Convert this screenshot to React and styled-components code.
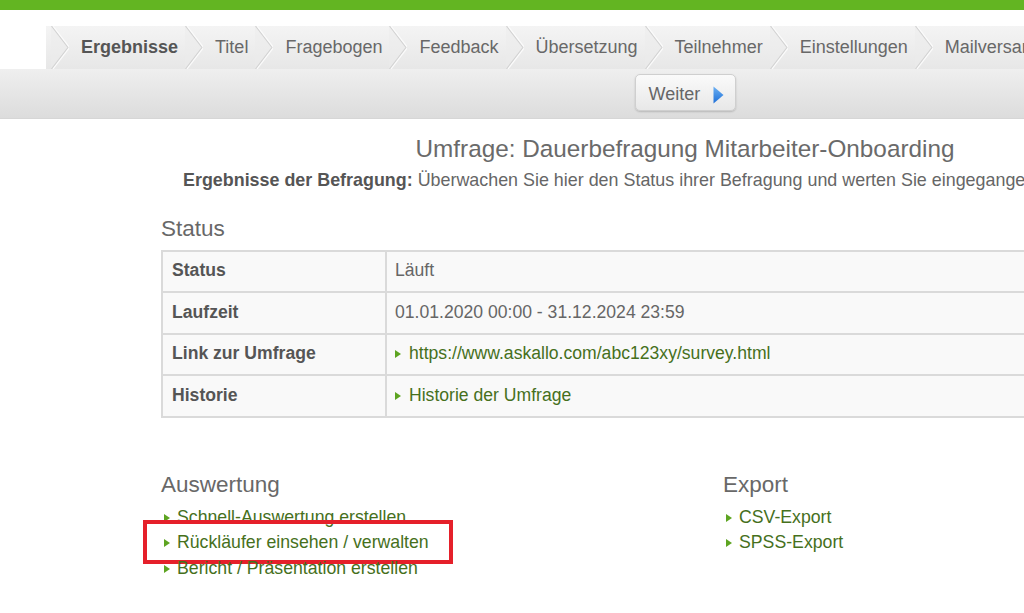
import React from "react";
import styled, { createGlobalStyle } from "styled-components";

const GlobalStyle = createGlobalStyle`
  html, body {
    margin: 0;
    padding: 0;
    background: #ffffff;
    overflow: hidden;
  }
  body {
    font-family: "Liberation Sans", Arial, sans-serif;
    color: #666;
  }
`;

const Page = styled.div`
  width: 1370px;
  min-height: 613px;
  background: #fff;
`;

const TopStripe = styled.div`
  height: 10px;
  background: #63b522;
`;

const TabBar = styled.nav`
  display: flex;
  align-items: stretch;
  height: 43px;
  margin: 16px 0 0 46px;
  padding-left: 5px;
  background: linear-gradient(#f4f4f4, #e7e7e7);
`;

const ChevronSvg = styled.svg`
  flex: none;
  width: 18px;
  height: 43px;
  margin-right: 12px;
`;

const TabLabel = styled.span`
  display: flex;
  align-items: center;
  margin-right: 7px;
  font-size: 18px;
  white-space: nowrap;
  font-weight: ${(p) => (p.$active ? 700 : 400)};
  color: ${(p) => (p.$active ? "#555" : "#686868")};
`;

const Toolbar = styled.div`
  box-sizing: border-box;
  height: 50px;
  display: flex;
  justify-content: center;
  align-items: flex-start;
  padding-top: 5px;
  background: linear-gradient(#efefef, #dcdcdc);
  border-bottom: 1px solid #d6d6d6;
`;

const NextButton = styled.button`
  box-sizing: border-box;
  height: 37px;
  width: 101px;
  display: flex;
  align-items: center;
  gap: 13px;
  padding: 4px 0 0 13px;
  border: 1px solid #cfcfcf;
  border-radius: 5px;
  background: linear-gradient(#fafafa, #e8e8e8);
  box-shadow: 0 1px 2px rgba(0, 0, 0, 0.18);
  font-family: "Liberation Sans", Arial, sans-serif;
  font-size: 18px;
  color: #666;
  cursor: pointer;
`;

const Content = styled.main`
  width: 1048px;
  margin: 0 auto;
`;

const Title = styled.h1`
  margin: 16px 0 0;
  font-size: 24.3px;
  line-height: 28px;
  font-weight: 400;
  text-align: center;
  color: #6a6a6a;
`;

const Intro = styled.p`
  margin: 7px 0 0;
  padding-left: 22px;
  font-size: 17.9px;
  line-height: 21px;
  white-space: nowrap;
  color: #666;
  b {
    color: #555;
  }
`;

const SectionHeading = styled.h2`
  margin: ${(p) => p.$mt || "0"} 0 0;
  font-size: 22.5px;
  line-height: 26px;
  font-weight: 400;
  color: #686868;
`;

const InfoTable = styled.table`
  width: 100%;
  margin-top: 8px;
  border-collapse: separate;
  border-spacing: 0;
  table-layout: fixed;
  border-top: 2px solid #dadada;
  border-left: 2px solid #dadada;
  border-right: 2px solid #dadada;
  font-size: 17.6px;
`;

const Cell = styled.td`
  box-sizing: border-box;
  padding: 8.5px 8px 10.5px ${(p) => (p.$label ? "9px" : "8px")};
  line-height: 20.5px;
  background: #f9f9f9;
  border-bottom: 2px solid #dadada;
  border-right: ${(p) => (p.$label ? "2px solid #dadada" : "none")};
  width: ${(p) => (p.$label ? "224px" : "auto")};
  font-weight: ${(p) => (p.$label ? 700 : 400)};
  color: ${(p) => (p.$label ? "#555" : "#666")};
  white-space: nowrap;
`;

const Bullet = styled.span`
  display: inline-block;
  width: 0;
  height: 0;
  margin-right: ${(p) => p.$gap || "7px"};
  border-left: 6px solid #5da421;
  border-top: 4.5px solid transparent;
  border-bottom: 4.5px solid transparent;
  vertical-align: 1px;
`;

const Link = styled.a`
  color: #46701c;
  text-decoration: none;
`;

const Columns = styled.div`
  display: grid;
  grid-template-columns: 562px 1fr;
  margin-top: 54px;
`;

const LinkList = styled.ul`
  list-style: none;
  margin: 7px 0 0;
  padding: 0 0 0 3px;
  font-size: 17.7px;
  line-height: 25.5px;
`;

const LinkItem = styled.li`
  position: relative;
  white-space: nowrap;
`;

const Highlight = styled.span`
  position: absolute;
  left: -21px;
  top: -10px;
  width: 310px;
  height: 44px;
  box-sizing: border-box;
  border: 4px solid #e5202a;
  pointer-events: none;
`;

const Chevron = () => (
  <ChevronSvg viewBox="0 0 18 43" aria-hidden="true">
    <polygon points="0,0 17,21.5 0,43 0,0" fill="#ececec" opacity="0.5" />
    <polyline points="0.5,0 17,21.5 0.5,43" fill="none" stroke="#d3d3d3" strokeWidth="1.2" />
    <polyline points="2,0 18.5,21.5 2,43" fill="none" stroke="#fbfbfb" strokeWidth="1.2" />
  </ChevronSvg>
);

const PlayIcon = () => (
  <svg width="11" height="18" viewBox="0 0 11 18" aria-hidden="true">
    <defs>
      <linearGradient id="blueTri" x1="0" y1="0" x2="0" y2="1">
        <stop offset="0" stopColor="#6cb0f2" />
        <stop offset="1" stopColor="#1d6fd8" />
      </linearGradient>
    </defs>
    <polygon points="0.5,0.5 10.5,9 0.5,17.5" fill="url(#blueTri)" />
  </svg>
);

const tabs = [
  "Ergebnisse",
  "Titel",
  "Fragebogen",
  "Feedback",
  "Übersetzung",
  "Teilnehmer",
  "Einstellungen",
  "Mailversand",
];

const rows = [
  { label: "Status", value: "Läuft" },
  { label: "Laufzeit", value: "01.01.2020 00:00 - 31.12.2024 23:59" },
  { label: "Link zur Umfrage", value: "https://www.askallo.com/abc123xy/survey.html", link: true },
  { label: "Historie", value: "Historie der Umfrage", link: true },
];

const evaluation = [
  "Schnell-Auswertung erstellen",
  "Rückläufer einsehen / verwalten",
  "Bericht / Präsentation erstellen",
];

const exportsList = ["CSV-Export", "SPSS-Export"];

export default function App() {
  return (
    <Page>
      <GlobalStyle />
      <TopStripe />
      <TabBar>
        {tabs.map((t, i) => (
          <React.Fragment key={t}>
            <Chevron />
            <TabLabel $active={i === 0}>{t}</TabLabel>
          </React.Fragment>
        ))}
      </TabBar>
      <Toolbar>
        <NextButton>
          Weiter
          <PlayIcon />
        </NextButton>
      </Toolbar>
      <Content>
        <Title>Umfrage: Dauerbefragung Mitarbeiter-Onboarding</Title>
        <Intro>
          <b>Ergebnisse der Befragung:</b> Überwachen Sie hier den Status ihrer Befragung und werten Sie
          eingegangene Rückläufer aus.
        </Intro>
        <SectionHeading $mt="24.5px">Status</SectionHeading>
        <InfoTable>
          <tbody>
            {rows.map((r) => (
              <tr key={r.label}>
                <Cell $label>{r.label}</Cell>
                <Cell>
                  {r.link ? (
                    <>
                      <Bullet $gap="8px" />
                      <Link href="#">{r.value}</Link>
                    </>
                  ) : (
                    r.value
                  )}
                </Cell>
              </tr>
            ))}
          </tbody>
        </InfoTable>
        <Columns>
          <section>
            <SectionHeading>Auswertung</SectionHeading>
            <LinkList>
              {evaluation.map((e, i) => (
                <LinkItem key={e}>
                  <Bullet />
                  <Link href="#">{e}</Link>
                  {i === 1 && <Highlight />}
                </LinkItem>
              ))}
            </LinkList>
          </section>
          <section>
            <SectionHeading>Export</SectionHeading>
            <LinkList>
              {exportsList.map((e) => (
                <LinkItem key={e}>
                  <Bullet />
                  <Link href="#">{e}</Link>
                </LinkItem>
              ))}
            </LinkList>
          </section>
        </Columns>
      </Content>
    </Page>
  );
}
